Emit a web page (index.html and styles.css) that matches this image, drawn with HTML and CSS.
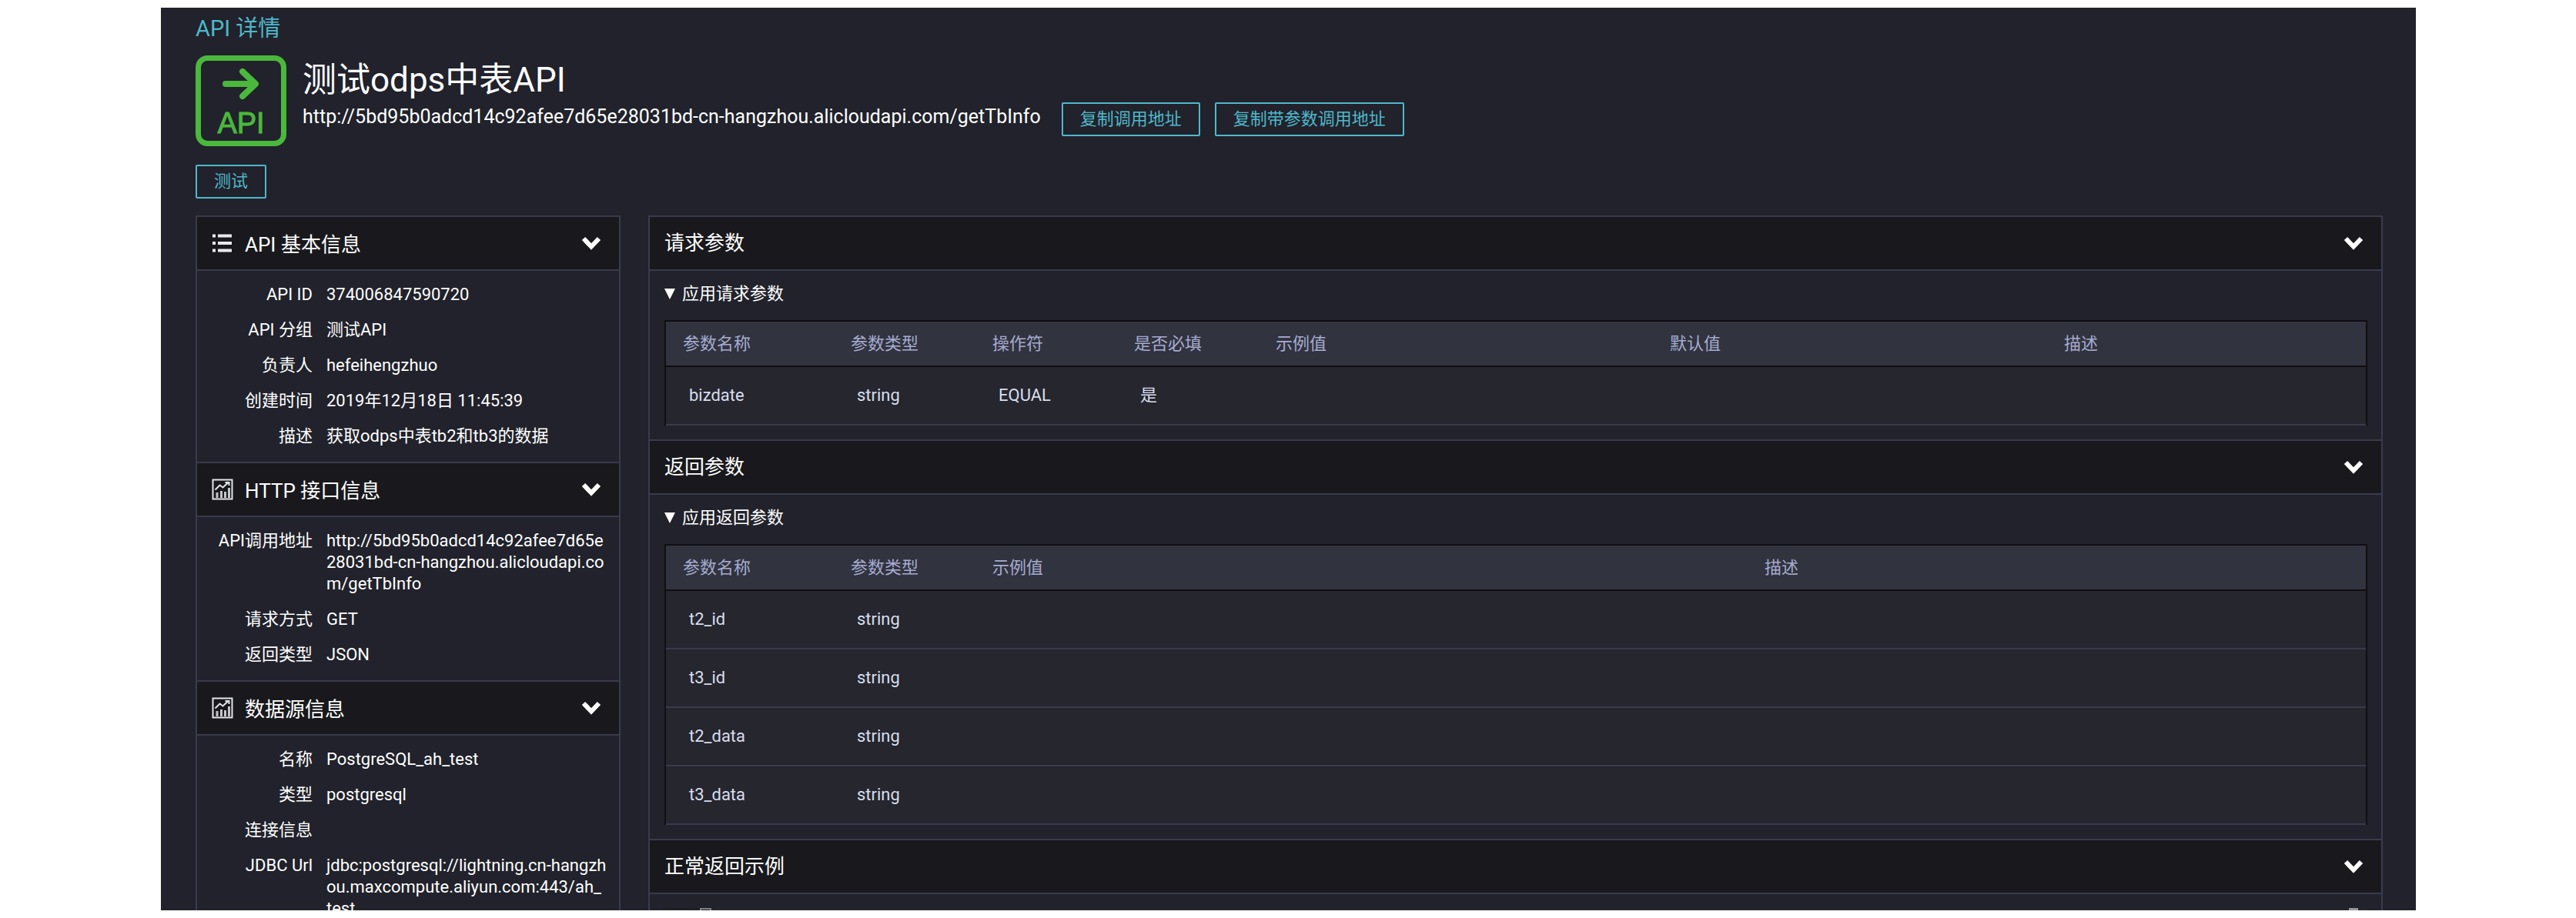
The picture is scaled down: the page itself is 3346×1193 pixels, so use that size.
FILE: index.html
```html
<!DOCTYPE html>
<html lang="zh-CN">
<head>
<meta charset="utf-8">
<title>API 详情</title>
<link rel="stylesheet" href="styles.css">
</head>
<body>

<!-- shared icons -->
<svg class="defs" aria-hidden="true">
	<symbol id="chevron" viewBox="0 0 26 18"><path d="M3 3L13 13.500L23 3" fill="none" stroke="#fff" stroke-width="6"/></symbol>
	<symbol id="list" viewBox="0 0 28 24"><path d="M1 2.500h4M8 2.500h18M1 12h4M8 12h18M1 21.500h4M8 21.500h18" fill="none" stroke="#e8e8ee" stroke-width="4"/></symbol>
	<symbol id="chart" viewBox="0 0 28 28"><path d="M1.500 1.500h25v25h-25z" fill="none" stroke="#e4e5ea" stroke-width="2"/><path d="M7 25v-7M12.500 25V16M17.500 25v-8M22.500 25V12" fill="none" stroke="#c4c5cb" stroke-width="3"/><path d="M4.500 14.500l6-6 4 3 7-6.500M17.500 5h5v4" fill="none" stroke="#e4e5ea" stroke-width="2"/></symbol>
	<symbol id="triangle" viewBox="0 0 14 14"><path d="M0 0h14L7 14z" fill="#fff"/></symbol>
</svg>

<main class="page">
	<a class="crumb" href="#">API 详情</a>

	<header class="top">
		<svg class="logo" viewBox="0 0 118 118" role="img" aria-label="API">
			<rect x="3.500" y="3.500" width="111" height="111" rx="12" fill="none" stroke="#4ab83c" stroke-width="7"/>
			<path d="M39 37h38M61 21l17 16-17 16" fill="none" stroke="#4ab83c" stroke-width="8" stroke-linecap="round" stroke-linejoin="round"/>
			<text class="logo-text" x="59" y="101" text-anchor="middle">API</text>
		</svg>
		<div class="headline">
			<h1>测试odps中表API</h1>
			<div class="address">
				<span class="url">http://5bd95b0adcd14c92afee7d65e28031bd-cn-hangzhou.alicloudapi.com/getTbInfo</span>
				<button class="btn" type="button">复制调用地址</button>
				<button class="btn" type="button">复制带参数调用地址</button>
			</div>
		</div>
	</header>

	<div class="actions">
		<button class="btn" type="button">测试</button>
	</div>

	<div class="columns">
		<aside class="panel side">
			<section>
				<div class="bar">
					<svg class="bar-icon"><use href="#list"/></svg>
					<h2>API 基本信息</h2>
					<button class="fold" type="button" aria-label="收起"><svg><use href="#chevron"/></svg></button>
				</div>
				<dl class="info">
					<dt>API ID</dt><dd>374006847590720</dd>
					<dt>API 分组</dt><dd>测试API</dd>
					<dt>负责人</dt><dd>hefeihengzhuo</dd>
					<dt>创建时间</dt><dd>2019年12月18日 11:45:39</dd>
					<dt>描述</dt><dd>获取odps中表tb2和tb3的数据</dd>
				</dl>
			</section>
			<section>
				<div class="bar">
					<svg class="bar-icon"><use href="#chart"/></svg>
					<h2>HTTP 接口信息</h2>
					<button class="fold" type="button" aria-label="收起"><svg><use href="#chevron"/></svg></button>
				</div>
				<dl class="info">
					<dt>API调用地址</dt><dd>http://5bd95b0adcd14c92afee7d65e28031bd-cn-hangzhou.alicloudapi.com/getTbInfo</dd>
					<dt>请求方式</dt><dd>GET</dd>
					<dt>返回类型</dt><dd>JSON</dd>
				</dl>
			</section>
			<section>
				<div class="bar">
					<svg class="bar-icon"><use href="#chart"/></svg>
					<h2>数据源信息</h2>
					<button class="fold" type="button" aria-label="收起"><svg><use href="#chevron"/></svg></button>
				</div>
				<dl class="info">
					<dt>名称</dt><dd>PostgreSQL_ah_test</dd>
					<dt>类型</dt><dd>postgresql</dd>
					<dt>连接信息</dt><dd></dd>
					<dt>JDBC Url</dt><dd>jdbc:postgresql://lightning.cn-hangzhou.maxcompute.aliyun.com:443/ah_<br>test</dd>
				</dl>
			</section>
		</aside>

		<div class="panel content">
			<section>
				<div class="bar">
					<h2>请求参数</h2>
					<button class="fold" type="button" aria-label="收起"><svg><use href="#chevron"/></svg></button>
				</div>
				<details class="group" open>
					<summary><svg><use href="#triangle"/></svg>应用请求参数</summary>
					<table class="params">
						<thead>
							<tr><th class="c-name">参数名称</th><th class="c-type">参数类型</th><th class="c-type">操作符</th><th class="c-type">是否必填</th><th class="c-text">示例值</th><th class="c-text">默认值</th><th>描述</th></tr>
						</thead>
						<tbody>
							<tr><td>bizdate</td><td>string</td><td>EQUAL</td><td>是</td><td></td><td></td><td></td></tr>
						</tbody>
					</table>
				</details>
			</section>
			<section>
				<div class="bar">
					<h2>返回参数</h2>
					<button class="fold" type="button" aria-label="收起"><svg><use href="#chevron"/></svg></button>
				</div>
				<details class="group" open>
					<summary><svg><use href="#triangle"/></svg>应用返回参数</summary>
					<table class="params">
						<thead>
							<tr><th class="c-name">参数名称</th><th class="c-type">参数类型</th><th class="c-wide">示例值</th><th>描述</th></tr>
						</thead>
						<tbody>
							<tr><td>t2_id</td><td>string</td><td></td><td></td></tr>
							<tr><td>t3_id</td><td>string</td><td></td><td></td></tr>
							<tr><td>t2_data</td><td>string</td><td></td><td></td></tr>
							<tr><td>t3_data</td><td>string</td><td></td><td></td></tr>
						</tbody>
					</table>
				</details>
			</section>
			<section>
				<div class="bar">
					<h2>正常返回示例</h2>
					<button class="fold" type="button" aria-label="收起"><svg><use href="#chevron"/></svg></button>
				</div>
				<div class="code">
					<span class="code-fold"></span>
					<span class="code-thumb"></span>
				</div>
			</section>
		</div>
	</div>
</main>

</body>
</html>
```
FILE: styles.css
```css
* {
  box-sizing: border-box;
}
body {
  margin: 0;
  height: 100vh;
  padding: 10px 208px 10px 209px;
  background: #fff;
  color: #fff;
  font-family: Roboto, "Noto Sans CJK SC", sans-serif;
  font-size: 22px;
  line-height: 28px;
}
h1, h2, dl, dd {
  margin: 0;
  font-weight: 400;
}
.defs {
  display: none;
}

.page {
  height: 100%;
  overflow: hidden;
  padding: 10px 43px 0 45px;
  background: #21222b;
}
.crumb {
  display: block;
  font-size: 29px;
  line-height: 34px;
  color: #4fb8cb;
  text-decoration: none;
}

/* title block */
.top {
  display: flex;
  gap: 21px;
  margin-top: 18px;
}
.logo {
  flex: none;
  width: 118px;
  height: 118px;
}
.logo-text {
  font-family: "Liberation Sans", Arial, sans-serif;
  font-size: 38px;
  fill: #4ab83c;
  stroke: #4ab83c;
}
.headline {
  padding-top: 8px;
}
h1 {
  font-size: 44px;
  line-height: 48px;
}
.address {
  display: flex;
  align-items: flex-start;
  gap: 19px;
  margin-top: 5px;
}
.url {
  padding: 5px 8px 0 0;
  font-size: 25px;
}
.btn {
  height: 44px;
  padding: 0 22px;
  border: 2px solid #4fb8cb;
  border-radius: 2px;
  background: transparent;
  color: #4fb8cb;
  font-family: inherit;
  font-size: 22px;
  line-height: 24px;
}
.actions {
  display: flex;
  margin: 24px 0 22px;
}

/* panels */
.columns {
  display: flex;
  align-items: flex-start;
  gap: 36px;
}
.panel {
  border: 2px solid #3a3a4d;
  border-top: 0;
}
.side {
  flex: none;
  width: 552px;
  min-height: 1000px;
}
.content {
  flex: 1;
  min-height: 1000px;
}
.bar {
  display: flex;
  align-items: center;
  height: 72px;
  padding: 0 19px;
  border-top: 2px solid #3a3a4d;
  border-bottom: 2px solid #3a3a4d;
  background: #19191d;
}
.bar-icon {
  width: 28px;
  height: 28px;
  margin-right: 15px;
}
h2 {
  font-size: 26px;
}
.side h2 {
  padding-top: 4px;
}
.fold {
  display: flex;
  margin-left: auto;
  padding: 4px;
  border: 0;
  background: none;
}
.fold svg {
  width: 26px;
  height: 18px;
}

.info {
  display: grid;
  grid-template-columns: 150px 1fr;
  gap: 18px;
  padding: 17px 14px 19px 0;
}
.info dt {
  text-align: right;
}
.info dd {
  word-break: break-all;
}

.group {
  padding: 16px 18px 18px 19px;
}
.group summary {
  display: flex;
  align-items: center;
  gap: 9px;
  margin-bottom: 20px;
  list-style: none;
}
.group summary svg {
  width: 14px;
  height: 14px;
}

.params {
  width: 100%;
  table-layout: fixed;
  border-collapse: separate;
  border-spacing: 0;
  border: 2px solid #0f0f12;
  border-bottom: 0;
}
.params th {
  height: 59px;
  padding: 0 22px;
  border-bottom: 2px solid #0f0f12;
  background: #31333f;
  color: #a6abcf;
  font-weight: 400;
  text-align: left;
}
.params td {
  height: 76px;
  padding: 0 30px;
  border-bottom: 2px solid #3a3a4d;
  background: #25262e;
  color: #d8ddec;
}
.c-name {
  width: 218px;
}
.c-type {
  width: 184px;
}
.c-text {
  width: 512px;
}
.c-wide {
  width: 1003px;
}

.code {
  display: flex;
  justify-content: space-between;
  height: 200px;
  margin: 18px;
  padding: 0 12px 0 47px;
  background: linear-gradient(to right, #1f2024 47px, #26262a 47px);
}
.code-fold {
  width: 15px;
  height: 20px;
  border: 2px solid #808188;
}
.code-thumb {
  width: 12px;
  background: #97979f;
}
```
